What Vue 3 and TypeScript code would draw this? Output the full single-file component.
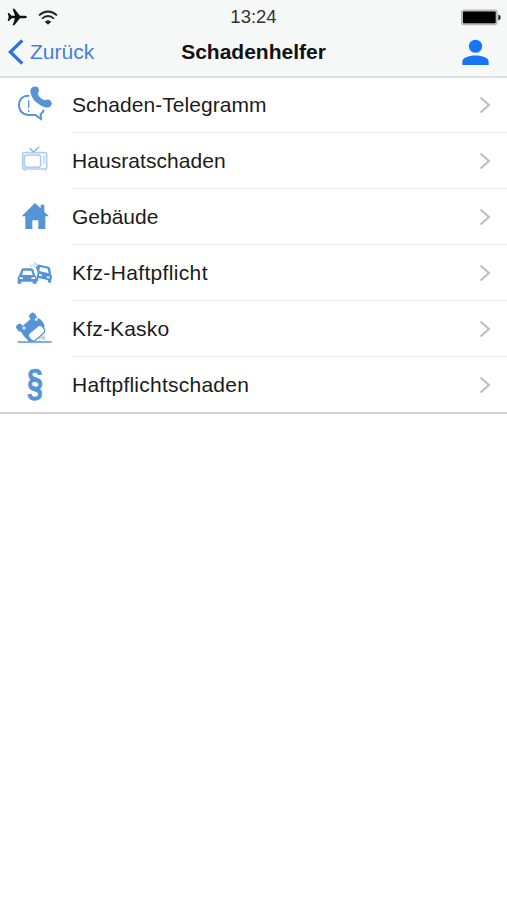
<script setup lang="ts">
interface Entry {
  label: string
  icon: 'phone' | 'tv' | 'house' | 'crash' | 'tilt' | 'law'
  viewBox: string
  tracking: string
}

const entries: Entry[] = [
  { label: 'Schaden-Telegramm', icon: 'phone', viewBox: '0 0 150 150', tracking: '0.05px' },
  { label: 'Hausratschaden', icon: 'tv', viewBox: '0 -7 150 150', tracking: '0.06px' },
  { label: 'Gebäude', icon: 'house', viewBox: '0 -7 150 150', tracking: '0px' },
  { label: 'Kfz-Haftpflicht', icon: 'crash', viewBox: '0 -6 150 150', tracking: '0.34px' },
  { label: 'Kfz-Kasko', icon: 'tilt', viewBox: '0 -4 150 150', tracking: '0.18px' },
  { label: 'Haftpflichtschaden', icon: 'law', viewBox: '0 0 150 150', tracking: '0.24px' },
]
</script>

<template>
  <main class="screen">
    <header class="header">
      <div class="status">
        <div class="signals">
          <svg class="plane" viewBox="0 0 60 54" fill="#111">
            <path d="M2 15h4l8 8h10L17 2h5l17 21h15q6 1 6 4t-6 4H39L22 52h-5l7-21H14l-8 8H2l3-12z" />
          </svg>
          <svg class="wifi" viewBox="0 0 60 45" fill="none" stroke="#222" stroke-width="5.5">
            <path d="M3 16Q30-7 57 16M12 26Q30 10 48 26" />
            <path d="M20 35q10-9 20 0L30 44z" fill="#222" stroke="none" />
          </svg>
        </div>
        <span class="time">13:24</span>
        <svg class="battery" viewBox="0 0 120 50">
          <rect x="2" y="3" width="106" height="43" rx="7" fill="#bbb" stroke="#b5b5b5" stroke-width="4" />
          <rect x="6" y="7" width="98" height="35" rx="3" fill="#000" />
          <path d="M112 16q7 2 7 9t-7 9z" fill="#222" />
        </svg>
      </div>
      <nav class="nav">
        <a class="back">
          <svg viewBox="0 0 48 78" fill="none" stroke="#2a72e3" stroke-width="10"><path d="M43 4L7 39l36 35" /></svg>
          <span>Zurück</span>
        </a>
        <h1>Schadenhelfer</h1>
        <svg class="profile" viewBox="0 0 82 82" fill="#1774f5">
          <circle cx="41" cy="22" r="20" />
          <path d="M1 79V69C1 57 20 50 41 50s40 7 40 19v10z" />
        </svg>
      </nav>
    </header>

    <ul class="list">
      <li v-for="entry in entries" :key="entry.label" class="row">
        <svg class="icon" :viewBox="entry.viewBox" fill="#5594d5" stroke="#5594d5" stroke-width="0">
          <template v-if="entry.icon === 'phone'">
            <path d="M58 48C40 45 26 58 27 77c1 16 12 26 27 28h22l17 12-1-15q7-4 9-13" fill="none" stroke-width="6" />
            <path d="M56 61v22m0 6v7" fill="none" stroke-width="4" />
            <path d="M67 22c8-5 16-3 19 4 4 8-3 11-2 16 2 8 10 15 18 18 6 2 9-4 16 0 8 4 10 12 4 18-7 8-18 4-28-1C78 69 67 57 63 43c-3-9-3-16 4-21z" />
          </template>
          <g v-else-if="entry.icon === 'tv'" fill="none" stroke="#aecdee">
            <path d="M59 29l11 12 18-16" stroke="#85b0df" stroke-width="4" />
            <rect x="38" y="43" width="72" height="49" rx="3" stroke-width="5" />
            <rect x="43" y="50" width="49" height="37" rx="7" stroke-width="5" />
            <path d="M102 51v25m-58 17v5m62-5v5" stroke-width="4" />
          </g>
          <path v-else-if="entry.icon === 'house'" d="M75 26L35 66h11v38h21V78h18v26h21V66h11L103 53V31H92v11z" />
          <template v-else-if="entry.icon === 'crash'">
            <path fill-rule="evenodd" d="M34 59q2-4 7-4h22q5 0 7 4l6 18q4 2 4 7v17H68v-6H34v6H23V84q0-4 4-7zm6 3l-4 13h32l-4-13zM29 81v6h10v-4zm46 0l-11 2v4h11z" />
            <path fill-rule="evenodd" d="M80 50l2-4q2-3 7-2l26 6q5 1 6 6l2 17q4 4 3 9l-4 17-9-2 1-6-28-7-2 10H78l5-28-7-17 10-1zm10 1l-2 12 28 7-3-14zM88 71l-1 6 8 2 1-5zm32 9l-9-1-1 5 8 1z" />
            <path d="M73 51l-5-9m8 3l-3-9m-7 13l-7-3m20-1l2-6" fill="none" stroke="#a8c8e9" stroke-width="3" />
          </template>
          <template v-else-if="entry.icon === 'tilt'">
            <g transform="translate(64 68) rotate(-40)">
              <rect x="-35" y="-34" width="19" height="22" rx="6" />
              <rect x="16" y="-34" width="19" height="22" rx="6" />
              <path d="M-20-22h39l8 6q10 3 10 14V12H-32V-4q0-9 5-12z" />
              <rect x="-24" y="8" width="52" height="28" rx="11" fill="#fff" stroke-width="4" />
              <path d="M-32-4h9v36q-9-3-9-11z" />
              <path d="M28-4h9v18q0 8-9 11z" />
            </g>
            <circle cx="42" cy="68" r="5" fill="#d0e3f5" />
            <circle cx="79" cy="42" r="5" fill="#d0e3f5" />
            <path d="M88 101l5-8 2 7 7-7-3 8 7 3m-16-1l-4 4m16-9l5-3" fill="none" stroke="#9dc1e8" stroke-width="3" />
            <path d="M23 108h102v4H23z" />
          </template>
          <text v-else class="paragraph" transform="translate(75 109) scale(.83 1.1)" text-anchor="middle">§</text>
        </svg>
        <span class="label" :style="{ letterSpacing: entry.tracking }">{{ entry.label }}</span>
        <svg class="chevron" viewBox="0 0 12 18" fill="none" stroke="#bcbcc0" stroke-width="2"><path d="M1.5 1.5L10 9l-8.5 7.5" /></svg>
      </li>
    </ul>
  </main>
</template>

<style>
body {
  margin: 0;
  background: #fff;
}
</style>

<style scoped>
.screen {
  width: 507px;
  height: 900px;
  overflow: hidden;
  background: #fff;
  font-family: "Liberation Sans", Arial, sans-serif;
  color: #1b1b1b;
}
.header {
  box-sizing: border-box;
  height: 78px;
  background: #f6f8f8;
  border-bottom: 2px solid #dfe2e2;
}
.status,
.nav {
  display: grid;
  grid-template-columns: 1fr auto 1fr;
  align-items: center;
}
.status {
  height: 34px;
  padding: 0 6px 0 7px;
}
.signals {
  display: flex;
  align-items: center;
  gap: 11px;
}
.plane {
  width: 20px;
  height: 18px;
}
.wifi {
  width: 20px;
  height: 15px;
}
.time {
  font-size: 18.5px;
  color: #333;
  margin-right: 1px;
}
.battery {
  width: 40px;
  height: 17px;
  justify-self: end;
}
.nav {
  height: 36px;
  padding: 0 18px 0 8px;
}
.back {
  display: flex;
  align-items: center;
  gap: 6px;
  font-size: 21px;
  color: #4380da;
}
.back svg {
  width: 16px;
  height: 26px;
}
.nav h1 {
  margin: 0 0 0 10px;
  font-size: 21px;
  line-height: 24px;
  color: #111;
}
.profile {
  width: 27px;
  height: 27px;
  justify-self: end;
}
.list {
  margin: 0;
  padding: 0;
  list-style: none;
  border-bottom: 2px solid #d0d0d0;
}
.row {
  box-sizing: border-box;
  display: grid;
  grid-template-columns: 50px 1fr 12px;
  column-gap: 12px;
  align-items: center;
  height: 56px;
  padding: 0 16px 0 10px;
  background: linear-gradient(#ededee, #ededee) 72px 100% / 100% 1px no-repeat;
}
.row:first-child {
  height: 55px;
  padding-bottom: 1px;
}
.row:last-child {
  height: 55px;
  padding-top: 1px;
  background: none;
}
.icon {
  width: 50px;
  height: 50px;
}
.paragraph {
  font: bold 104px "Liberation Sans", Arial, sans-serif;
  stroke-width: 2px;
}
.label {
  font-size: 21px;
  line-height: 26px;
}
.chevron {
  width: 12px;
  height: 18px;
}
</style>
